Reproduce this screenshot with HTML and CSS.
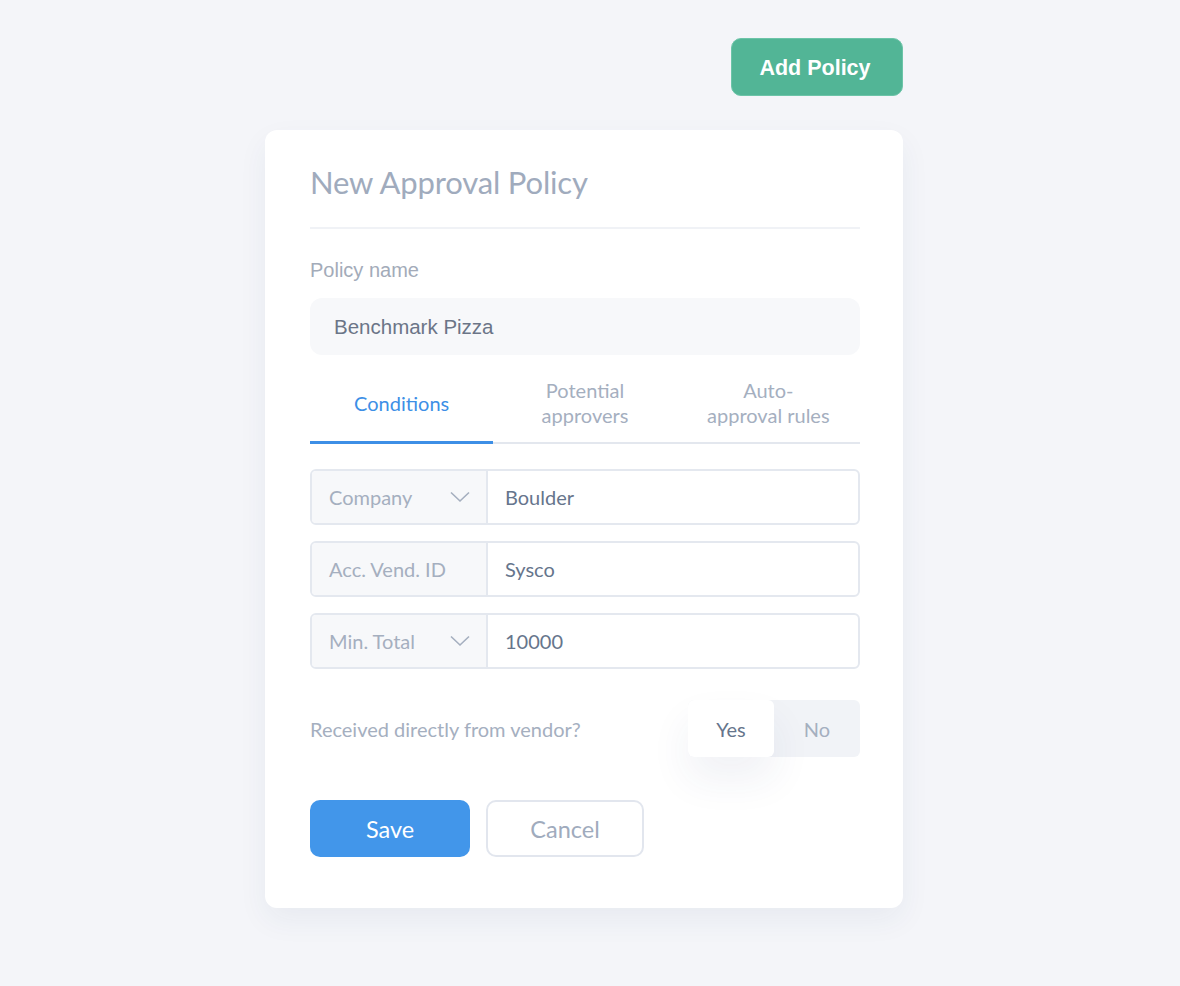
FILE: index.html
```html
<!DOCTYPE html>
<html>
<head>
<meta charset="utf-8">
<link rel="stylesheet" href="styles.css">
</head>
<body>
<div class="page">
  <div class="topbar"><button class="add-btn">Add Policy</button></div>
  <div class="card">
    <h1 class="title">New Approval Policy</h1>
    <div class="divider"></div>
    <label class="field-label">Policy name</label>
    <div class="text-input">Benchmark Pizza</div>
    <div class="tabs">
      <div class="tab active">Conditions</div>
      <div class="tab">Potential<br>approvers</div>
      <div class="tab">Auto-<br>approval rules</div>
    </div>
    <div class="conditions">
      <div class="cond-row">
        <div class="cond-key">Company
          <svg class="chev" width="20" height="12" viewBox="0 0 20 12"><path d="M1 1.5 L10 10 L19 1.5" fill="none" stroke="#a5afbf" stroke-width="1.6"/></svg>
        </div>
        <div class="cond-val">Boulder</div>
      </div>
      <div class="cond-row">
        <div class="cond-key">Acc. Vend. ID</div>
        <div class="cond-val">Sysco</div>
      </div>
      <div class="cond-row">
        <div class="cond-key">Min. Total
          <svg class="chev" width="20" height="12" viewBox="0 0 20 12"><path d="M1 1.5 L10 10 L19 1.5" fill="none" stroke="#a5afbf" stroke-width="1.6"/></svg>
        </div>
        <div class="cond-val">10000</div>
      </div>
    </div>
    <div class="toggle-row">
      <span class="toggle-label">Received directly from vendor?</span>
      <div class="toggle">
        <div class="seg on">Yes</div>
        <div class="seg">No</div>
      </div>
    </div>
    <div class="actions">
      <button class="btn save">Save</button>
      <button class="btn cancel">Cancel</button>
    </div>
  </div>
</div>
</body>
</html>
```

FILE: styles.css
```css
* { box-sizing: border-box; }
html, body { margin: 0; padding: 0; }
body {
  background: #f4f5f9;
  font-family: "Lato", "Liberation Sans", sans-serif;
  height: 986px;
}
.page {
  width: 638px;
  margin-left: 265px;
  padding-top: 38px;
}
.topbar {
  display: flex;
  justify-content: flex-end;
}
.add-btn {
  width: 172px;
  height: 58px;
  background: #52b596;
  border: 1px solid #6cc4a8;
  border-radius: 10px;
  color: #fff;
  font-family: "Liberation Sans", Arial, sans-serif;
  font-weight: bold;
  font-size: 21.5px;
  padding: 3px 4px 0 0;
  cursor: pointer;
}
.card {
  margin-top: 34px;
  background: #fff;
  border-radius: 12px;
  box-shadow: 0 12px 30px rgba(40, 60, 110, 0.06);
  padding: 35px 43px 51px 45px;
}
.title {
  margin: 0;
  font-size: 31px;
  line-height: 35px;
  font-weight: 400;
  color: #a0abbd;
  letter-spacing: -0.15px;
}
.divider {
  margin-top: 27px;
  height: 2px;
  background: #f0f2f6;
}
.field-label {
  display: block;
  margin-top: 30px;
  font-family: "Liberation Sans", Arial, sans-serif;
  font-size: 20px;
  line-height: 22px;
  color: #a3abb9;
}
.text-input {
  margin-top: 17px;
  height: 57px;
  background: #f7f8fa;
  border-radius: 12px;
  padding-left: 24px;
  display: flex;
  align-items: center;
  font-family: "Liberation Sans", Arial, sans-serif;
  font-size: 20.5px;
  color: #6b7587;
}
.tabs {
  margin-top: 15px;
  display: flex;
  border-bottom: 2px solid #e3e7ee;
}
.tab {
  flex: 1;
  text-align: center;
  padding: 8px 0 14px;
  height: 72px;
  display: flex;
  align-items: center;
  justify-content: center;
  font-size: 20px;
  line-height: 25px;
  color: #a5afbf;
  position: relative;
}
.tab.active {
  color: #3d8fe6;
}
.tab.active::after {
  content: "";
  position: absolute;
  left: 0;
  right: 0;
  bottom: -2px;
  height: 3px;
  background: #3d8fe6;
}
.conditions {
  margin-top: 25px;
  display: flex;
  flex-direction: column;
  gap: 16px;
}
.cond-row {
  display: flex;
  height: 56px;
  border: 2px solid #e4e8ef;
  border-radius: 6px;
  overflow: hidden;
}
.cond-key {
  width: 176px;
  flex: none;
  background: #f7f8fa;
  border-right: 2px solid #e4e8ef;
  display: flex;
  align-items: center;
  justify-content: space-between;
  padding: 0 16px 0 17px;
  font-size: 20px;
  color: #a5afbf;
}
.chev { display: block; }
.cond-val {
  flex: 1;
  display: flex;
  align-items: center;
  padding-left: 17px;
  font-size: 20px;
  color: #66758c;
}
.toggle-row {
  margin-top: 31px;
  display: flex;
  align-items: center;
  justify-content: space-between;
}
.toggle-label {
  font-size: 20px;
  color: #a5afbf;
}
.toggle {
  display: flex;
  width: 172px;
  height: 57px;
  background: #f1f3f7;
  border-radius: 6px;
}
.seg {
  flex: 1;
  display: flex;
  align-items: center;
  justify-content: center;
  font-size: 20px;
  color: #a5afbf;
  border-radius: 6px;
}
.seg.on {
  background: #fff;
  color: #66758c;
  box-shadow: 0 22px 40px rgba(40, 60, 110, 0.07);
}
.actions {
  margin-top: 43px;
  display: flex;
  gap: 16px;
}
.btn {
  height: 57px;
  border-radius: 10px;
  font-family: "Lato", "Liberation Sans", sans-serif;
  font-size: 23.5px;
  padding: 0;
  cursor: pointer;
}
.save {
  width: 160px;
  background: #4296ea;
  border: none;
  color: #fff;
}
.cancel {
  width: 158px;
  background: #fff;
  border: 2px solid #e2e6ee;
  color: #a0abbd;
}
```
